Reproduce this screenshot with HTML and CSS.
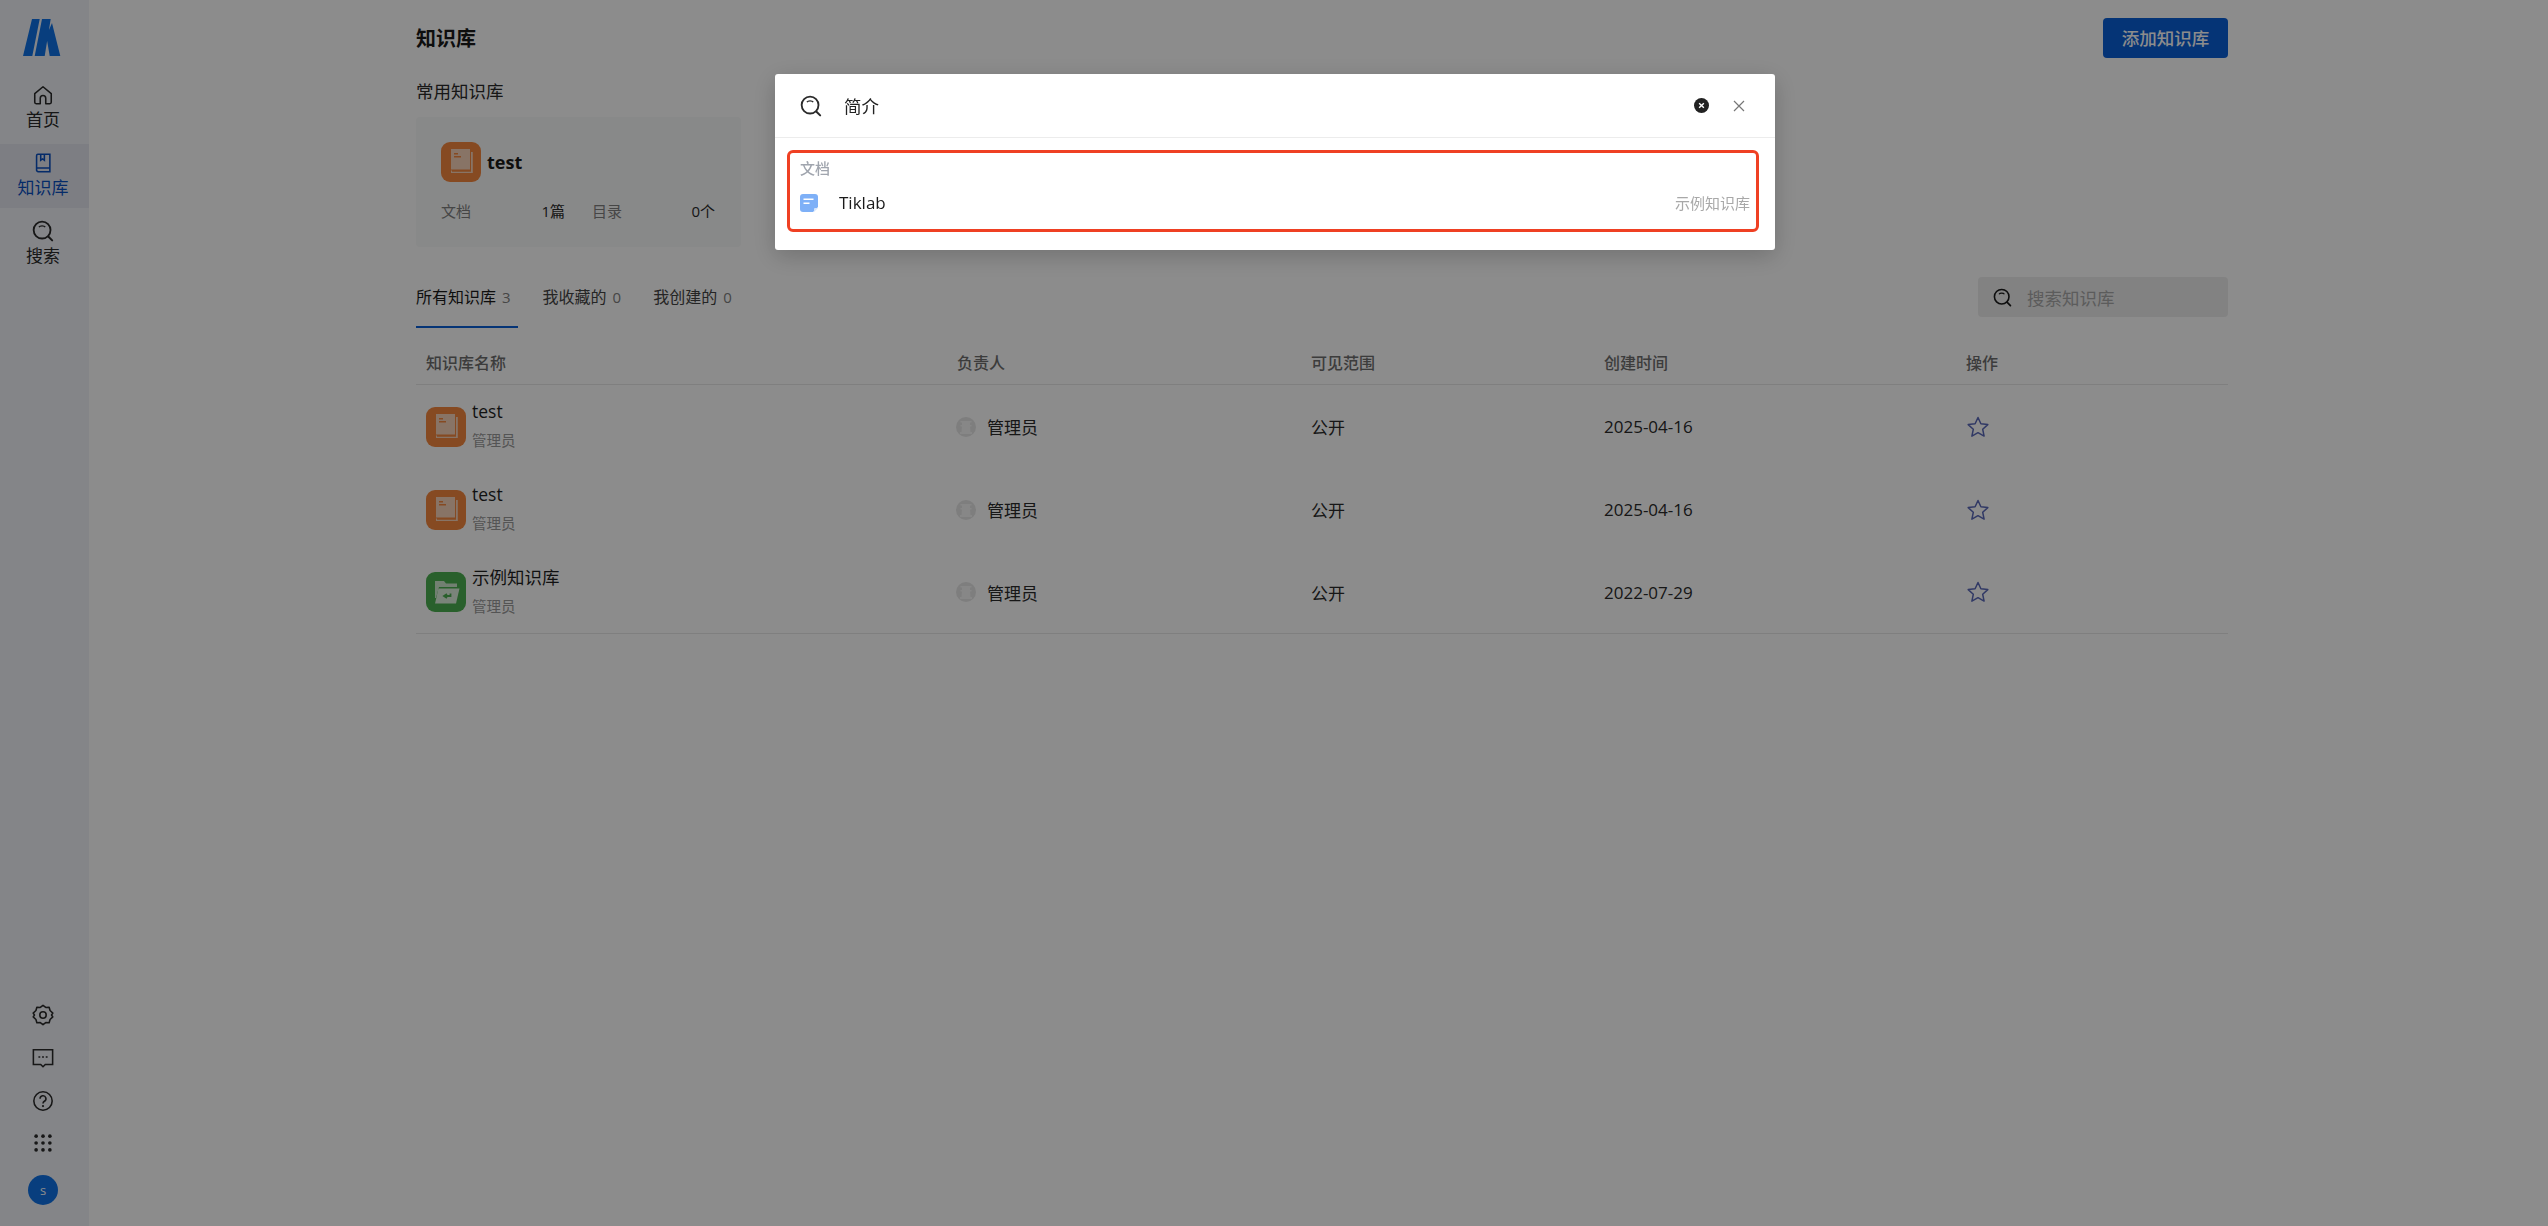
FILE: index.html
```html
<!DOCTYPE html>
<html lang="zh-CN">
<head>
<meta charset="utf-8">
<title>知识库</title>
<link rel="stylesheet" href="styles.css">
</head>
<body>
<svg class="defs" width="0" height="0" aria-hidden="true">
  <defs>
    <symbol id="i-search" viewBox="0 0 24 24">
      <circle cx="11" cy="11" r="9.2" fill="none" stroke="currentColor" stroke-width="2"/>
      <path d="M7.600 7.800C8.600 6 13.400 6 14.400 7.800" fill="none" stroke="currentColor" stroke-width="1.500"/>
      <path d="M18 18.200l4 4" fill="none" stroke="currentColor" stroke-width="2.200" stroke-linecap="round"/>
    </symbol>
    <symbol id="i-book" viewBox="0 0 40 40">
      <rect width="40" height="40" rx="9" fill="#f5883f"/>
      <path d="M10 7h19v21H10z" fill="#f7d3bb"/>
      <path d="M30 10h1.800v21H10v-3.500h1v2.300h19z" fill="#f7d3bb"/>
      <path d="M10 27.500h20v1H10z" fill="#f5883f"/>
      <path d="M13 11h4v1.400h-4zM13 14h7v1.400h-7z" fill="#f5883f"/>
    </symbol>
    <symbol id="i-folder" viewBox="0 0 40 40">
      <rect width="40" height="40" rx="9" fill="#4caf50"/>
      <path d="M9 9h9l2 2.500h11V15H13l-3 11H9z" fill="#cfe9d0"/>
      <path d="M12.500 16.500H33.500l-3.500 15H9z" fill="#dff1df"/>
      <path d="M24.500 21.500v2.500h-6M21 22l-3 2 3 2" fill="none" stroke="#4caf50" stroke-width="1.800"/>
    </symbol>
    <symbol id="i-star" viewBox="0 0 24 24">
      <path d="M12 2.500l2.900 6.300 6.900.8-5.100 4.700 1.400 6.800L12 17.700l-6.100 3.400 1.400-6.800-5.100-4.700 6.900-.8z" fill="none" stroke="currentColor" stroke-width="1.500" stroke-linejoin="round"/>
    </symbol>
    <symbol id="i-avatar" viewBox="0 0 20 20">
      <circle cx="10" cy="10" r="10" fill="#e6e6e6"/>
      <path d="M4.500 4h11v1.500H14V8h1.500v1.500H14l.5 5.500H16v2H4v-2h1.500L6 9.500H4.500V8H6V5.500H4.500z" fill="#f6f6f6"/>
    </symbol>
  </defs>
</svg>

<div class="app">
  <aside class="sidebar">
    <div class="side-top">
      <svg class="logo" viewBox="0 0 38 37"><path d="M9 0h7.700L9.300 37H0zM19 0h8.700l-6 37h-10zM29 4l8.300 33H26.700l-3.400-20z" fill="#0f72e6"/></svg>
      <a class="nav-item">
        <svg class="nav-icon" viewBox="0 0 24 24"><path d="M3 10.500L12 3l9 7.500V20a1.500 1.500 0 0 1-1.500 1.500H15V15.500a3 3 0 0 0-6 0v6H4.500A1.500 1.500 0 0 1 3 20z" fill="none" stroke="currentColor" stroke-width="1.700" stroke-linejoin="round"/></svg>
        <span>首页</span>
      </a>
      <a class="nav-item nav-active">
        <svg class="nav-icon" viewBox="0 0 24 24"><path d="M5 19V4A1.500 1.500 0 0 1 6.500 2.500H19.500V21.500H7A2 2 0 0 1 5 19zM5 17.500h14.500M9.500 3v6l2-1.500 2 1.500V3" fill="none" stroke="currentColor" stroke-width="1.700"/></svg>
        <span>知识库</span>
      </a>
      <a class="nav-item">
        <svg class="nav-icon"><use href="#i-search"/></svg>
        <span>搜索</span>
      </a>
    </div>
    <div class="side-bottom">
      <svg class="tool" viewBox="0 0 24 24"><path d="M12 1.500l3 2.300 3.700-.3 1 3.600 3 2.900-1.400 2 1.400 2-3 2.900-1 3.600-3.700-.3-3 2.300-3-2.300-3.700.3-1-3.600-3-2.900 1.400-2-1.400-2 3-2.900 1-3.600 3.700.3z" fill="none" stroke="currentColor" stroke-width="1.700" stroke-linejoin="round"/><circle cx="12" cy="12" r="3.500" fill="none" stroke="currentColor" stroke-width="1.700"/></svg>
      <svg class="tool" viewBox="0 0 24 24"><path d="M1.500 3h21v16h-8l-2.500 2.500L9.500 19h-8z" fill="none" stroke="currentColor" stroke-width="1.700"/><path d="M7 11h2M11 11h2M15 11h2" stroke="currentColor" stroke-width="1.700"/></svg>
      <svg class="tool" viewBox="0 0 24 24"><circle cx="12" cy="12" r="10" fill="none" stroke="currentColor" stroke-width="1.700"/><path d="M8.800 9.500A3.200 3.200 0 1 1 13.500 12.300c-1 .6-1.500 1.200-1.500 2.400" fill="none" stroke="currentColor" stroke-width="1.700"/><circle cx="12" cy="17.500" r="1.200" fill="currentColor"/></svg>
      <svg class="tool" viewBox="0 0 24 24" fill="currentColor"><circle cx="4.500" cy="4.500" r="2"/><circle cx="12" cy="4.500" r="2"/><circle cx="19.500" cy="4.500" r="2"/><circle cx="4.500" cy="12" r="2"/><circle cx="12" cy="12" r="2"/><circle cx="19.500" cy="12" r="2"/><circle cx="4.500" cy="19.500" r="2"/><circle cx="12" cy="19.500" r="2"/><circle cx="19.500" cy="19.500" r="2"/></svg>
      <div class="user">s</div>
    </div>
  </aside>

  <main class="main">
    <div class="content">
      <header class="page-head">
        <h1>知识库</h1>
        <button class="add-btn">添加知识库</button>
      </header>
      <div class="section-title">常用知识库</div>
      <div class="recent-card">
        <div class="recent-head">
          <svg class="repo-icon"><use href="#i-book"/></svg>
          <strong>test</strong>
        </div>
        <div class="recent-stats">
          <div class="stat"><span class="muted">文档</span><span>1篇</span></div>
          <div class="stat stat-b"><span class="muted">目录</span><span>0个</span></div>
        </div>
      </div>

      <div class="tabs-row">
        <div class="tabs">
          <div class="tab tab-active">所有知识库<span class="count">3</span></div>
          <div class="tab">我收藏的<span class="count">0</span></div>
          <div class="tab">我创建的<span class="count">0</span></div>
        </div>
        <div class="search-box">
          <svg class="box-icon"><use href="#i-search"/></svg>
          <span>搜索知识库</span>
        </div>
      </div>

      <div class="table">
        <div class="row row-head">
          <div>知识库名称</div><div>负责人</div><div>可见范围</div><div>创建时间</div><div>操作</div>
        </div>
        <div class="row">
          <div class="name-cell"><svg class="repo-icon"><use href="#i-book"/></svg><div class="name-text"><span>test</span><small>管理员</small></div></div>
          <div class="owner"><svg class="avatar"><use href="#i-avatar"/></svg>管理员</div>
          <div>公开</div><div>2025-04-16</div>
          <div><svg class="star"><use href="#i-star"/></svg></div>
        </div>
        <div class="row">
          <div class="name-cell"><svg class="repo-icon"><use href="#i-book"/></svg><div class="name-text"><span>test</span><small>管理员</small></div></div>
          <div class="owner"><svg class="avatar"><use href="#i-avatar"/></svg>管理员</div>
          <div>公开</div><div>2025-04-16</div>
          <div><svg class="star"><use href="#i-star"/></svg></div>
        </div>
        <div class="row">
          <div class="name-cell"><svg class="repo-icon"><use href="#i-folder"/></svg><div class="name-text"><span>示例知识库</span><small>管理员</small></div></div>
          <div class="owner"><svg class="avatar"><use href="#i-avatar"/></svg>管理员</div>
          <div>公开</div><div>2022-07-29</div>
          <div><svg class="star"><use href="#i-star"/></svg></div>
        </div>
      </div>
    </div>
  </main>
</div>

<div class="mask"></div>

<section class="modal">
  <div class="modal-search">
    <svg class="modal-icon"><use href="#i-search"/></svg>
    <span class="query">简介</span>
    <svg class="clear" viewBox="0 0 16 16"><circle cx="8" cy="8" r="8" fill="#222"/><path d="M5.500 5.500l5 5M10.500 5.500l-5 5" stroke="#fff" stroke-width="1.500"/></svg>
    <svg class="close" viewBox="0 0 12 12"><path d="M1 1l10 10M11 1L1 11" stroke="#777" stroke-width="1.200"/></svg>
  </div>
  <div class="results">
    <div class="results-label">文档</div>
    <div class="result">
      <svg class="doc-icon" viewBox="0 0 18 18"><path d="M3 0h12a3 3 0 0 1 3 3v10l-5 5H3a3 3 0 0 1-3-3V3a3 3 0 0 1 3-3z" fill="#7eb0f7"/><path d="M3.500 4.500h10V6h-10zM3.500 8.500h6V10h-6z" fill="#fff"/><path d="M18 14l-4 4v-3a1 1 0 0 1 1-1z" fill="#d6e5fc"/></svg>
      <span class="result-title">Tiklab</span>
      <span class="result-repo">示例知识库</span>
    </div>
  </div>
</section>
</body>
</html>
```
FILE: styles.css
```css
* { box-sizing: border-box; }
html, body { margin: 0; height: 100%; }
body {
  width: 2548px;
  height: 1226px;
  overflow: hidden;
  font-family: "Open Sans", "Noto Sans CJK SC", "Noto Sans", sans-serif;
  font-size: 16px;
  color: #2a2a2a;
  background: #fff;
}
.defs { position: absolute; }
.app { display: flex; height: 1226px; }

.sidebar {
  width: 89px;
  flex: none;
  background: #f1f3f8;
  display: flex;
  flex-direction: column;
  justify-content: space-between;
}
.side-top { display: flex; flex-direction: column; }
.logo { width: 38px; height: 37px; margin: 19px 0 20px 23px; display: block; }
.nav-item {
  height: 64px;
  padding: 8px 3px 0 0;
  margin-bottom: 4px;
  display: flex;
  flex-direction: column;
  align-items: center;
  font-size: 17px;
  line-height: 24px;
  color: #2a2a2a;
}
.nav-icon { width: 22px; height: 22px; margin-bottom: 2px; flex: none; }
.nav-active { background: #e4e6ee; color: #0a4fc0; }
.side-bottom {
  display: flex;
  flex-direction: column;
  align-items: center;
  padding: 0 3px 21px 0;
}
.tool { width: 22px; height: 22px; margin-bottom: 20.670px; color: #2a2a2a; }
.user {
  width: 30px; height: 30px; border-radius: 50%;
  background: #0f72e6; color: #fff;
  display: flex; align-items: center; justify-content: center;
  font-size: 13px;
}

.main { flex: 1; }
.content { width: 1812px; margin-left: 327px; }
.page-head { height: 58px; padding-top: 18px; display: flex; justify-content: space-between; align-items: flex-start; }
.page-head h1 { margin: 1px 0 0; font-size: 20px; line-height: 40px; font-weight: 700; color: #1a1a1a; height: 40px; }
.add-btn {
  border: 0; width: 125px; height: 40px; border-radius: 4px;
  background: #0a5fd8; color: #fff;
  font: 500 17.500px/40px "Open Sans", "Noto Sans CJK SC", sans-serif;
  padding: 0;
}
.section-title { margin-top: 21px; font-size: 17.500px; line-height: 24px; color: #2a2a2a; }

.recent-card {
  width: 325px; height: 130px;
  margin-top: 14px;
  padding: 25px 25px 0;
  background: #f8f9f9;
  border-radius: 4px;
}
.recent-head { display: flex; align-items: center; gap: 6px; height: 40px; }
.recent-head strong { font-size: 18px; color: #1a1a1a; }
.repo-icon { width: 40px; height: 40px; flex: none; }
.recent-stats { display: flex; margin-top: 17px; font-size: 15px; line-height: 24px; }
.stat { width: 124px; display: flex; justify-content: space-between; }
.stat-b { width: 123px; margin-left: 27px; }
.muted { color: #808080; }

.tabs-row { margin-top: 30px; height: 51px; display: flex; justify-content: space-between; align-items: flex-start; }
.tabs { display: flex; gap: 25px; }
.tab { height: 51px; padding: 8px 7px 0 0; font-size: 16px; line-height: 24px; color: #444; }
.tab-active { color: #1a1a1a; border-bottom: 2px solid #0a5fd8; }
.count { margin-left: 6px; font-size: 15px; color: #808080; }
.search-box {
  width: 250px; height: 40px;
  background: #ededed; border-radius: 4px;
  display: flex; align-items: center;
  padding-left: 15px; gap: 15px;
  color: #a8a8a8; font-size: 17.500px;
}
.box-icon { width: 19px; height: 19px; color: #1a1a1a; flex: none; }

.table { margin-top: 12px; }
.row {
  display: grid;
  grid-template-columns: 531px 354px 293px 362px 1fr;
  padding-left: 10px;
  height: 83px;
  align-items: center;
  font-size: 17px;
  color: #2a2a2a;
}
.row-head { height: 45px; border-bottom: 1px solid #e8e8e8; font-weight: 500; font-size: 16px; color: #6e6e6e; }
.row:last-child { border-bottom: 1px solid #e8e8e8; }
.name-cell { display: flex; align-items: center; gap: 7px; }
.name-text { display: flex; flex-direction: column; margin-left: -1px; }
.name-text span { font-size: 17.500px; line-height: 24px; color: #1f1f1f; margin: -7px 0 7px; }
.name-text small { font-size: 14.500px; line-height: 22px; color: #9a9a9a; margin-bottom: -5px; }
.owner { display: flex; align-items: center; gap: 11px; margin-left: -1px; }
.avatar { width: 20px; height: 20px; }
.star { width: 24px; height: 24px; color: #5a68b8; display: block; }

.mask { position: fixed; inset: 0; background: rgba(0, 0, 0, .45); }

.modal {
  position: fixed; left: 775px; top: 74px;
  width: 1000px; height: 176px;
  background: #fff; border-radius: 3px;
  box-shadow: 0 6px 24px rgba(0, 0, 0, .2);
}
.modal-search {
  height: 64px;
  display: flex; align-items: center;
  padding: 0 30px 0 25px;
  border-bottom: 1px solid #ececec;
  font-size: 17.500px;
  color: #222;
}
.modal-icon { width: 22px; height: 22px; color: #2a2a2a; flex: none; }
.query { margin-left: 22px; flex: 1; }
.clear { width: 15px; height: 15px; margin-right: 24px; }
.close { width: 12px; height: 12px; }
.results {
  margin: 12px 16px 0 12px;
  height: 82px;
  border: 3px solid #ef4023;
  border-radius: 6px;
  padding: 4px 6px 0 10px;
}
.results-label { font-size: 15px; line-height: 22px; color: #a0a5ae; font-weight: 500; }
.result { display: flex; align-items: center; height: 47px; }
.doc-icon { width: 18px; height: 18px; flex: none; }
.result-title { margin-left: 21px; flex: 1; font-size: 17px; color: #1a1a1a; }
.result-repo { font-size: 15px; color: #a8a8a8; }
```
